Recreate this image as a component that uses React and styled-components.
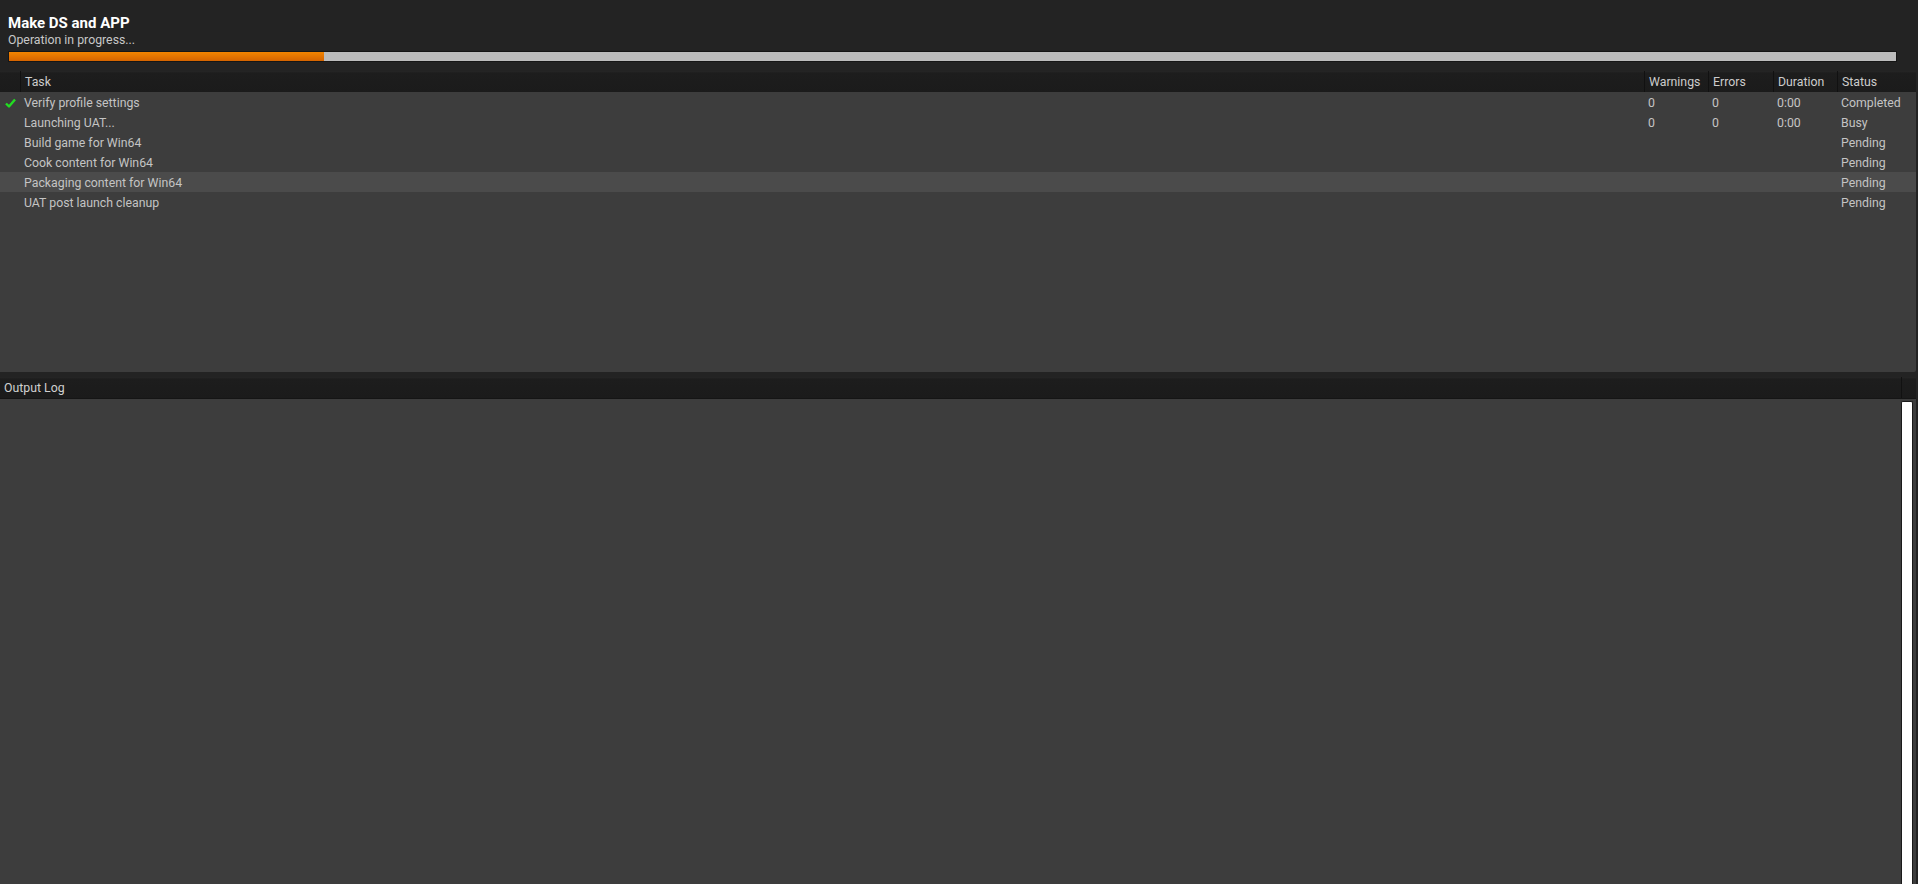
import React from 'react';
import styled, { createGlobalStyle } from 'styled-components';

const GlobalStyle = createGlobalStyle`
  html, body {
    margin: 0;
    padding: 0;
    background: #232323;
  }
  body {
    font-family: Roboto, "Noto Sans", sans-serif;
    color: #c4c4c4;
    overflow: hidden;
  }
`

const Window = styled.div`
  display: flex;
  flex-direction: column;
  height: 100vh;
  padding-right: 2px;
  box-sizing: border-box;
`

const Header = styled.div`
  padding: 14px 19px 0 8px;
`

const Title = styled.div`
  font-size: 15px;
  font-weight: 700;
  line-height: 18px;
  color: #ffffff;
`

const Subtitle = styled.div`
  font-size: 12.3px;
  line-height: 16px;
  color: #c8c8c8;
`

const Progress = styled.div`
  height: 11px;
  margin-top: 3px;
  margin-bottom: 9px;
  border: 1px solid #161616;
  background: #bcbcbc;
  box-sizing: border-box;
  display: flex;
`

const ProgressFill = styled.div`
  height: 100%;
  background: linear-gradient(#f28400, #d56400);
`

const TaskPanel = styled.div`
  height: 301px;
  background: #3d3d3d;
  border-bottom-right-radius: 2px;
  flex-shrink: 0;
`

const GridRow = styled.div`
  display: grid;
  grid-template-columns: 20px 1fr 64px 65px 64px 79px;
  height: ${p => (p.$head ? 21 : 20)}px;
  align-items: stretch;
  background: ${p => (p.$head ? 'linear-gradient(#262626 0, #1d1d1d 2px, #1b1b1b)' : p.$selected ? '#4b4b4b' : 'transparent')};
  font-size: 12.3px;
  color: ${p => (p.$head ? '#cccccc' : '#c4c4c4')};
`

const Cell = styled.div`
  display: flex;
  align-items: center;
  padding-left: ${p => (p.$icon ? 0 : 4)}px;
  padding-top: ${p => (p.$head ? 0 : 2)}px;
  box-sizing: border-box;
  justify-content: ${p => (p.$icon ? 'center' : 'flex-start')};
  white-space: nowrap;
  overflow: hidden;
  border-left: ${p => (p.$head && !p.$first ? '1px solid #111111' : 'none')};
`

const Gap = styled.div`
  height: 5px;
  flex-shrink: 0;
`

const LogBar = styled.div`
  height: 21px;
  display: flex;
  background: linear-gradient(#262626 0, #1d1d1d 2px, #1b1b1b);
  border-bottom: 1px solid #151515;
  flex-shrink: 0;
  font-size: 12.3px;
  color: #d0d0d0;
`

const LogLabel = styled.div`
  flex: 1;
  display: flex;
  align-items: center;
  padding-left: 4px;
`

const LogCorner = styled.div`
  width: 14px;
  border-left: 1px solid #111111;
`

const LogArea = styled.div`
  flex: 1;
  background: #3d3d3d;
  display: flex;
  justify-content: flex-end;
  padding: 2px 3px 0 0;
`

const ScrollThumb = styled.div`
  width: 10px;
  background: #ffffff;
  border: 1px solid #1a1a1a;
  border-bottom: none;
  border-radius: 2px 2px 0 0;
`

const Check = () => (
  <svg width="11" height="10" viewBox="0 0 11 10">
    <path d="M1 5.5 L4 8.5 L10 1.5" fill="none" stroke="#22dd22" strokeWidth="2.4" strokeLinejoin="round" />
  </svg>
)

const tasks = [
  { name: 'Verify profile settings', warnings: '0', errors: '0', duration: '0:00', status: 'Completed', done: true },
  { name: 'Launching UAT...', warnings: '0', errors: '0', duration: '0:00', status: 'Busy' },
  { name: 'Build game for Win64', status: 'Pending' },
  { name: 'Cook content for Win64', status: 'Pending' },
  { name: 'Packaging content for Win64', status: 'Pending', selected: true },
  { name: 'UAT post launch cleanup', status: 'Pending' },
]

const App = () => {
  return (
    <Window>
      <GlobalStyle />
      <Header>
        <Title>Make DS and APP</Title>
        <Subtitle>Operation in progress...</Subtitle>
        <Progress>
          <ProgressFill style={{ width: '16.7%' }} />
        </Progress>
      </Header>

      <TaskPanel>
        <GridRow $head>
          <Cell $head $first />
          <Cell $head>Task</Cell>
          <Cell $head>Warnings</Cell>
          <Cell $head>Errors</Cell>
          <Cell $head>Duration</Cell>
          <Cell $head>Status</Cell>
        </GridRow>
        {tasks.map(t => (
          <GridRow key={t.name} $selected={t.selected}>
            <Cell $icon>{t.done && <Check />}</Cell>
            <Cell>{t.name}</Cell>
            <Cell>{t.warnings}</Cell>
            <Cell>{t.errors}</Cell>
            <Cell>{t.duration}</Cell>
            <Cell>{t.status}</Cell>
          </GridRow>
        ))}
      </TaskPanel>

      <Gap />

      <LogBar>
        <LogLabel>Output Log</LogLabel>
        <LogCorner />
      </LogBar>
      <LogArea>
        <ScrollThumb />
      </LogArea>
    </Window>
  )
}

export default App;
